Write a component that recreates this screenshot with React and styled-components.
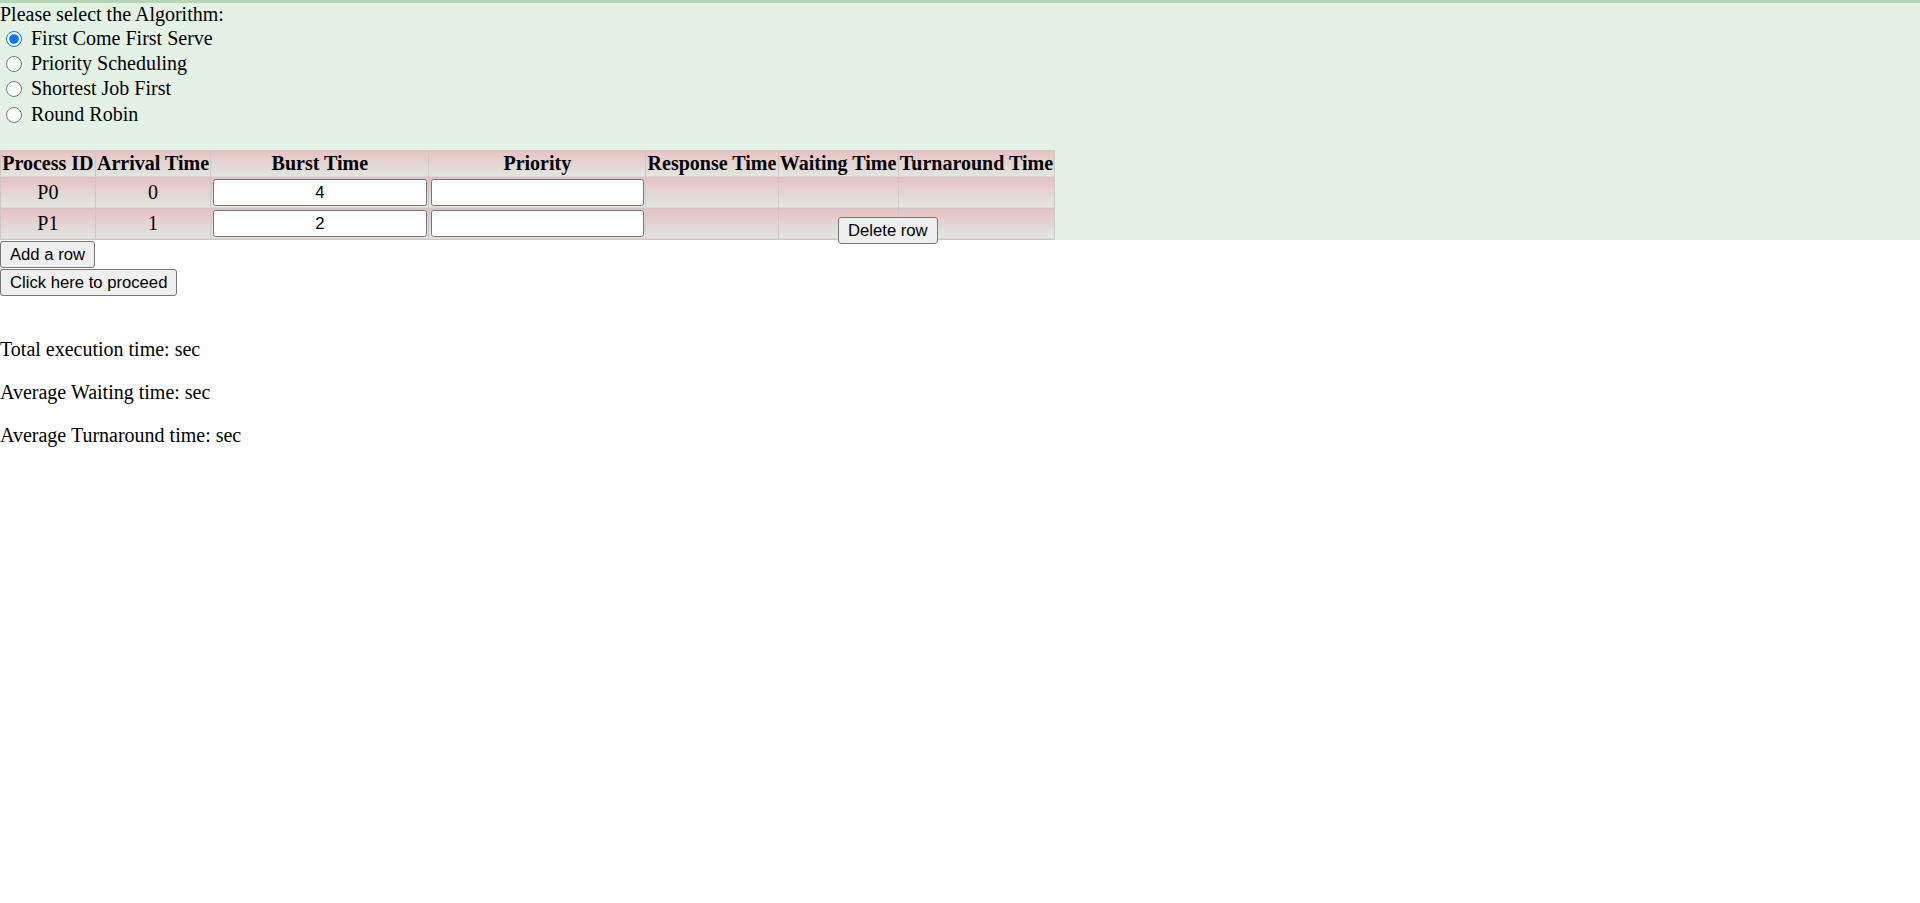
import React from "react";
import styled, { createGlobalStyle } from "styled-components";

const Global = createGlobalStyle`
  html, body { margin: 0; padding: 0; background: #ffffff; }
  body {
    font-family: "Liberation Serif", "Times New Roman", serif;
    font-size: 20px;
    line-height: 23px;
    color: #000;
  }
`;

const Page = styled.div`
  display: flex;
  flex-direction: column;
`;

const Panel = styled.section`
  position: relative;
  background: #e4f2e5;
  border-top: 3px solid #b5d5b7;
  display: flex;
  flex-direction: column;
  align-items: flex-start;
`;

const Prompt = styled.div`
  height: 23px;
`;

const RadioList = styled.div`
  display: flex;
  flex-direction: column;
  margin-bottom: 23px;
`;

const RadioRow = styled.label`
  display: flex;
  align-items: center;
  height: 25.2px;
`;

const Radio = styled.input.attrs({ type: "radio" })`
  width: 16px;
  height: 16px;
  margin: 1px 3.75px 0 6.25px;
  accent-color: #0075ff;
`;

const RadioText = styled.span`
  margin-left: 5px;
`;

const Table = styled.table`
  border-collapse: collapse;
  border-spacing: 0;
`;

const Cell = styled.td`
  border: 1px solid #c9c9c9;
  padding: 1.5px 1.25px;
  text-align: center;
  vertical-align: middle;
  background: linear-gradient(to bottom, #e8c1c1 0%, #e4d3d1 45%, #e1e6e0 100%);
  white-space: nowrap;
`;

const Head = styled(Cell).attrs({ as: "th" })`
  font-weight: bold;
  height: 23px;
`;

const Field = styled.input.attrs({ type: "text" })`
  box-sizing: border-box;
  width: ${(p) => p.$w}px;
  height: 27px;
  margin: 0;
  padding: 1.25px 2.5px;
  border: 1.5px solid #767676;
  border-radius: 2.5px;
  background: #fff;
  font-family: "Liberation Sans", Arial, sans-serif;
  font-size: 16.67px;
  color: #000;
  text-align: center;
  display: block;
`;

const Button = styled.button`
  font-family: "Liberation Sans", Arial, sans-serif;
  font-size: 16.67px;
  line-height: 19px;
  color: #000;
  background: #efefef;
  border: 1.25px solid #767676;
  border-radius: 3px;
  padding: 2.5px 9px;
  margin: 0;
  height: 27px;
  cursor: pointer;
`;

const DeleteButton = styled(Button)`
  position: absolute;
  left: 838px;
  top: 214px;
  z-index: 2;
`;

const Actions = styled.div`
  display: flex;
  flex-direction: column;
  align-items: flex-start;
  gap: 1px;
  padding-top: 1px;
`;

const Results = styled.div`
  margin-top: 42px;
`;

const ResultLine = styled.p`
  margin: 0 0 20px;
  line-height: 23px;
`;

const algorithms = [
  "First Come First Serve",
  "Priority Scheduling",
  "Shortest Job First",
  "Round Robin",
];

const headers = [
  "Process ID",
  "Arrival Time",
  "Burst Time",
  "Priority",
  "Response Time",
  "Waiting Time",
  "Turnaround Time",
];

const rows = [
  { id: "P0", arrival: "0", burst: "4" },
  { id: "P1", arrival: "1", burst: "2" },
];

export default function App() {
  return (
    <Page>
      <Global />
      <Panel>
        <Prompt>Please select the Algorithm:</Prompt>
        <RadioList>
          {algorithms.map((a, i) => (
            <RadioRow key={a}>
              <Radio name="algo" defaultChecked={i === 0} />
              <RadioText>{a}</RadioText>
            </RadioRow>
          ))}
        </RadioList>
        <Table>
          <thead>
            <tr>
              {headers.map((h) => (
                <Head key={h}>{h}</Head>
              ))}
            </tr>
          </thead>
          <tbody>
            {rows.map((r) => (
              <tr key={r.id}>
                <Cell>{r.id}</Cell>
                <Cell>{r.arrival}</Cell>
                <Cell>
                  <Field $w={214.5} defaultValue={r.burst} />
                </Cell>
                <Cell>
                  <Field $w={213.5} defaultValue="" />
                </Cell>
                <Cell />
                <Cell />
                <Cell />
              </tr>
            ))}
          </tbody>
        </Table>
        <DeleteButton>Delete row</DeleteButton>
      </Panel>
      <Actions>
        <Button>Add a row</Button>
        <Button>Click here to proceed</Button>
      </Actions>
      <Results>
        <ResultLine>Total execution time: sec</ResultLine>
        <ResultLine>Average Waiting time: sec</ResultLine>
        <ResultLine>Average Turnaround time: sec</ResultLine>
      </Results>
    </Page>
  );
}
